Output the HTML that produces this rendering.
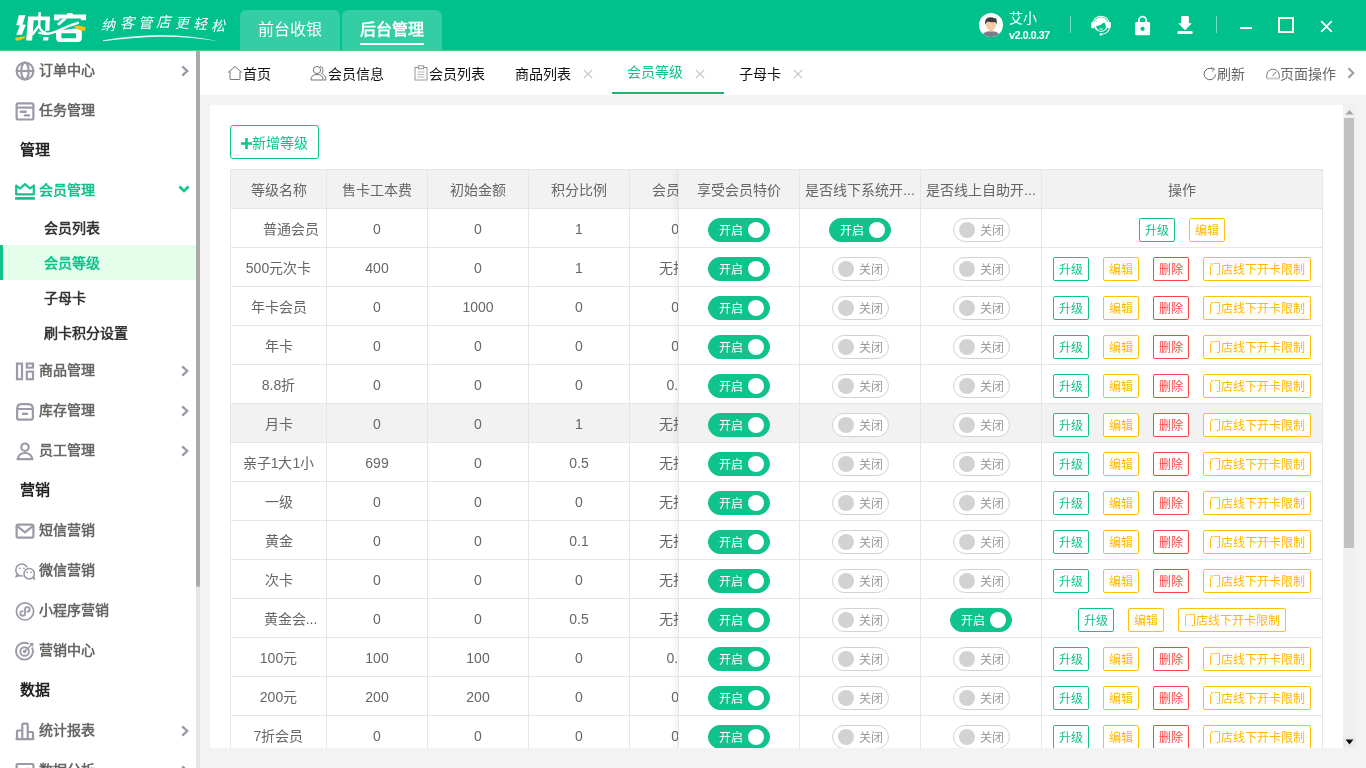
<!DOCTYPE html>
<html lang="zh-CN"><head><meta charset="utf-8"><title>纳客</title>
<style>
*{box-sizing:border-box;margin:0;padding:0}
html,body{width:1366px;height:768px;overflow:hidden}
body{-webkit-font-smoothing:antialiased;background:#f3f3f3;font-family:"Liberation Sans",sans-serif;font-size:14px;color:#666;position:relative}
.abs{position:absolute}
#hdr,#side,#tabs,#panel{will-change:transform}
#hdr{position:absolute;left:0;top:0;width:1366px;height:50px;background:#00c18b}
#hline{position:absolute;left:0;top:50px;width:1366px;height:1px;background:#3fd977}
.htab{position:absolute;top:10px;height:40px;width:100px;background:#33cea3;border-radius:6px 6px 0 0;color:#fff;font-size:16px;line-height:40px;text-align:center}
#side{position:absolute;left:0;top:51px;width:196px;height:717px;background:#fff;overflow:hidden}
#sbar{position:absolute;left:196px;top:51px;width:4px;height:717px;background:#e5e5e5}
#sbar i{position:absolute;left:0;top:0;width:4px;height:536px;background:#aaa;border-radius:0 0 2px 2px}
.mi{position:absolute;left:39px;font-size:14px;font-weight:bold;color:#666;line-height:20px;white-space:nowrap}
.mh{position:absolute;left:20px;font-size:15px;font-weight:bold;color:#222;line-height:20px}
.ms{position:absolute;left:44px;font-size:14px;font-weight:bold;color:#333;line-height:20px;white-space:nowrap}
.ic{position:absolute;left:15px;width:20px;height:20px}
.chev{position:absolute;left:180px;width:10px;height:12px}
#tabs{position:absolute;left:200px;top:51px;width:1166px;height:44px;background:#fff}
.tb{position:absolute;top:0;line-height:20px;font-size:14px;color:#111;white-space:nowrap}
.tx{position:absolute;width:10px;height:10px}
#panel{position:absolute;left:210px;top:105px;width:1133px;height:643px;background:#fff;overflow:hidden;border-radius:2px 0 0 2px}
#vs{position:absolute;left:1343px;top:105px;width:13px;height:643px;background:#f0f0f0}
#vs i{position:absolute;left:1px;top:13px;width:10px;height:430px;background:#c1c1c1}
#add{position:absolute;left:20px;top:20px;width:89px;height:34px;border:1px solid #10c28c;border-radius:3px;color:#10c28c;font-size:14px;line-height:34px;white-space:nowrap}
#tbl{position:absolute;left:20px;top:64px;width:1093px;height:600px;border-top:1px solid #e6e6e6;border-left:1px solid #e6e6e6}
.r{position:absolute;left:0;width:1092px;height:39px;border-bottom:1px solid #e6e6e6}
.c{position:absolute;top:0;height:38px;border-right:1px solid #e6e6e6;text-align:center;line-height:40px;font-size:14px;color:#666;white-space:nowrap;overflow:hidden}
.hd .c{background:#f2f2f2}
.hv .c{background:#f2f2f2}
#fix{position:absolute;left:468px;top:64px;width:645px;height:600px;background:#fff;border-top:1px solid #e6e6e6;border-left:1px solid #e6e6e6;box-shadow:-1px 0 8px rgba(0,0,0,.08);clip-path:inset(0 0 0 -12px)}
#fix .r{width:644px}
.sw{position:absolute;top:9px;height:24px;border-radius:12px;font-size:12px;line-height:25px}
.on{width:62px;background:#10c28c;border:1px solid #10c28c;color:#fff}
.on b{position:absolute;left:10px;top:0;font-weight:normal}
.on i{position:absolute;left:39px;top:3px;width:16px;height:16px;border-radius:8px;background:#fff}
.off{width:57px;background:#fff;border:1px solid #d2d2d2;color:#999}
.off b{position:absolute;left:26px;top:0;font-weight:normal}
.off i{position:absolute;left:5px;top:3px;width:16px;height:16px;border-radius:8px;background:#d2d2d2}
.bt{position:absolute;top:9px;height:24px;border-radius:2px;font-size:12px;line-height:25px;text-align:center;background:#fff;white-space:nowrap}
.bg{border:1px solid #10c28c;color:#10c28c;width:36px}
.by{border:1px solid #ffc107;color:#ffb800;width:36px}
.br{border:1px solid #ff4444;color:#ff4444;width:36px}
.bl{border:1px solid #ffc107;color:#ffb800;width:108px}
</style></head>
<body>
<div id="hdr"><svg class="abs" style="left:10px;top:6px" width="90" height="42" viewBox="0 0 1366 637">
<g fill="#fff">
<polygon points="135,140 235,140 190,280 240,285 180,435 95,435 150,295 95,290"/>
<polygon points="275,160 605,160 603,215 360,215 335,525 245,525"/>
<polygon points="540,200 605,200 598,375 532,375"/>
<polygon points="505,470 585,470 580,525 500,525"/>
<path d="M430 95 H470 L462 300 Q470 370 560 395 L540 430 Q450 400 440 330 L350 450 L320 420 L425 290 Z"/>
<path d="M440 385 Q560 440 760 340 Q900 270 1040 235 L1050 268 Q900 310 780 372 Q570 478 425 418 Z"/>
<rect x="870" y="105" width="80" height="45"/>
<path d="M670 130 H1155 V215 H1075 V188 H750 V215 H670 Z"/>
<polygon points="800,190 870,190 745,300 712,272"/>
<path fill-rule="evenodd" d="M700 400 L780 365 L1000 340 H1090 V490 Q1090 545 1030 545 H760 Q700 545 700 490 Z M780 415 H1000 V490 H780 Z"/>
</g>
<g fill="#ffc20e">
<polygon points="80,480 230,458 225,485 140,525 85,525"/>
<polygon points="965,310 1020,295 1150,320 1140,375 1060,370"/>
</g>
</svg><svg class="abs" style="left:98px;top:8px" width="134" height="40" viewBox="0 0 134 40">
<g font-family="Liberation Sans,sans-serif" font-style="italic" font-size="14" fill="#fff">
<text x="2.500" y="21.500">纳</text><text x="21.500" y="19.500" font-size="14.500">客</text><text x="39.500" y="19.500" font-size="14.500">管</text><text x="58" y="18.500" font-size="14.500">店</text><text x="76.500" y="19.500">更</text><text x="94.500" y="20.500">轻</text><text x="112.500" y="22.500">松</text>
</g>
<path d="M5 32.300 Q35 27 62 26.900 Q95 27.300 121 33.400 Q95 28.600 62 28.700 Q35 29.200 5.400 33.300 Z" fill="#fff" opacity=".9"/>
</svg><div class="htab" style="left:240px">前台收银</div><div class="htab" style="left:342px;font-weight:bold">后台管理<i class="abs" style="left:18px;top:33px;width:64px;height:2px;background:#fff"></i></div><svg class="abs" style="left:979px;top:13px" width="24" height="24" viewBox="0 0 24 24"><defs><clipPath id="av"><circle cx="12" cy="12" r="12"/></clipPath></defs><circle cx="12" cy="12" r="12" fill="#fff"/><g clip-path="url(#av)"><path d="M3 24 q0 -5.800 9 -5.800 q9 0 9 5.800z" fill="#7b7b8c"/><path d="M10.300 15 h3.400 v3.200 q-1.700 1.300 -3.400 0z" fill="#f3b58f"/><ellipse cx="12" cy="12" rx="5" ry="5.400" fill="#f7c9a4"/><path d="M6.300 12 q-1.300 -8 5.400 -7.800 q2.500 0 4 1.200 l1.300 -0.300 q1.700 3.500 0.600 6.900 q-0.300 -2.300 -1.600 -3.100 q-3.500 0.800 -7.300 -0.400 q-1.800 1 -2.400 3.500z" fill="#3c3c3c"/></g></svg><div class="abs" style="left:1009px;top:9px;color:#fff;font-size:14px;line-height:18px">艾小</div><div class="abs" style="left:1009px;top:28px;color:#fff;font-size:11px;font-weight:bold;line-height:14px;letter-spacing:-0.6px">v2.0.0.37</div><i class="abs" style="left:1070px;top:16px;width:1px;height:17px;background:rgba(255,255,255,.45)"></i><svg class="abs" style="left:1091px;top:14px" width="20" height="22" viewBox="0 0 20 22"><path d="M1.800 9.200 A8.300 8.300 0 0 1 18.200 9.200" stroke="#fff" stroke-width="1.100" fill="none"/><circle cx="10" cy="10.600" r="7.300" fill="#fff"/><rect x="0.200" y="8" width="3.400" height="6.200" rx="1.200" fill="#fff"/><rect x="16.400" y="8" width="3.400" height="6.200" rx="1.200" fill="#fff"/><path d="M5.100 12.200 Q9.500 11.800 13.200 8.200 Q15.600 11 14.900 14.200 Q13.200 17 10 17 Q6.300 17 5.100 12.200 Z" fill="#00c18b"/><path d="M8.200 14.700 Q10 15.900 11.800 14.700" stroke="#fff" stroke-width="0.900" fill="none"/><path d="M18.400 14 Q17.600 19.400 10.600 20.300" stroke="#fff" stroke-width="1.100" fill="none"/><circle cx="9.900" cy="20.300" r="1.350" fill="#fff"/></svg><svg class="abs" style="left:1134px;top:15px" width="17" height="22" viewBox="0 0 17 22"><path d="M4.900 8 v-2.600 a3.700 3.700 0 0 1 7.400 0 v2.600" stroke="#fff" stroke-width="1.800" fill="none"/><rect x="1.100" y="7" width="15" height="13.200" rx="1.500" fill="#fff"/><circle cx="8.600" cy="13.800" r="2.100" fill="#00c18b"/></svg><svg class="abs" style="left:1177px;top:15px" width="17" height="20" viewBox="0 0 17 20"><path d="M4.200 2.200 a1.300 1.300 0 0 1 1.300 -1.300 h5.100 a1.300 1.300 0 0 1 1.300 1.300 v6 h2.900 l-6.750 7.100 l-6.750 -7.100 h2.900 z" fill="#fff"/><rect x="0.400" y="16.100" width="15.300" height="3" rx="1.300" fill="#fff"/></svg><i class="abs" style="left:1216px;top:16px;width:1px;height:17px;background:rgba(255,255,255,.45)"></i><i class="abs" style="left:1240px;top:27px;width:12px;height:2px;background:#fff"></i><i class="abs" style="left:1278px;top:17px;width:16px;height:16px;border:2px solid #fdfde6"></i><svg class="abs" style="left:1320px;top:20px" width="13" height="13" viewBox="0 0 13 13"><path d="M1.200 1.200 L11.800 11.800 M11.800 1.200 L1.200 11.800" stroke="#fff" stroke-width="1.800"/></svg></div>
<div id="hline"></div>
<div id="side"><svg class="ic" style="top:10px" viewBox="0 0 20 20" fill="none" stroke="#9a9aa8" stroke-width="2.200"><circle cx="10" cy="10" r="8.400"/><ellipse cx="10" cy="10" rx="3.700" ry="8.400"/><path d="M1.600 10 H18.400"/></svg><div class="mi" style="top:9px">订单中心</div><svg class="chev" style="top:14px" viewBox="0 0 10 12"><path d="M2.300 1.300 L7.200 6 L2.300 10.700" stroke="#9a9aa8" stroke-width="2.400" fill="none"/></svg><svg class="ic" style="top:50px" viewBox="0 0 20 20" fill="none" stroke="#9a9aa8" stroke-width="2.200"><rect x="1.600" y="2.300" width="16.800" height="16.200" rx="1.800"/><path d="M1.600 6.600 H18.400"/><path d="M5.800 10.800 H10.800 M9.800 14.400 H14" stroke-linecap="round" stroke-width="2.400"/></svg><div class="mi" style="top:49px">任务管理</div><div class="mh" style="top:89px">管理</div><svg class="ic" style="top:130px" viewBox="0 0 20 20" fill="none" stroke="#10c28c" stroke-width="2.200"><path d="M1.200 13.400 V4.500 L5 7.500 L10 3.200 L15 7.500 L18.800 4.500 V13.400 Z" stroke-linejoin="round"/><path d="M1.200 17.400 H18.800" stroke-width="2.700" stroke-linecap="round"/></svg><div class="mi" style="top:129px;color:#10c28c">会员管理</div><svg class="chev" style="top:132px;left:178px;width:12px" viewBox="0 0 12 12"><path d="M1.500 3.500 L6 8 L10.500 3.500" stroke="#10c28c" stroke-width="2.600" fill="none"/></svg><div class="ms" style="top:167px">会员列表</div><div class="abs" style="left:0;top:194px;width:196px;height:35px;background:#e5fdeb"><i class="abs" style="left:0;top:0;width:3px;height:35px;background:#10c28c"></i></div><div class="ms" style="top:202px;color:#10c28c">会员等级</div><div class="ms" style="top:237px">子母卡</div><div class="ms" style="top:272px">刷卡积分设置</div><svg class="ic" style="top:310px" viewBox="0 0 20 20" fill="none" stroke="#9a9aa8" stroke-width="2.200"><rect x="2" y="2.600" width="5" height="15.600"/><rect x="11.800" y="2.600" width="6.200" height="4"/><rect x="11.800" y="10.600" width="6.200" height="7.600"/></svg><div class="mi" style="top:309px">商品管理</div><svg class="chev" style="top:314px" viewBox="0 0 10 12"><path d="M2.300 1.300 L7.200 6 L2.300 10.700" stroke="#9a9aa8" stroke-width="2.400" fill="none"/></svg><svg class="ic" style="top:350px" viewBox="0 0 20 20" fill="none" stroke="#9a9aa8" stroke-width="2.200"><path d="M2.100 8.200 Q2.100 3.200 6.500 3.200 H13.500 Q17.900 3.200 17.900 8.200"/><rect x="2.100" y="8" width="15.800" height="10.600" rx="1.800"/><path d="M7 12.800 H13" stroke-width="2.400"/></svg><div class="mi" style="top:349px">库存管理</div><svg class="chev" style="top:354px" viewBox="0 0 10 12"><path d="M2.300 1.300 L7.200 6 L2.300 10.700" stroke="#9a9aa8" stroke-width="2.400" fill="none"/></svg><svg class="ic" style="top:390px" viewBox="0 0 20 20" fill="none" stroke="#9a9aa8" stroke-width="2.200"><circle cx="10" cy="6.200" r="3.700"/><path d="M2.500 18.200 Q4 12 10 12 Q16 12 17.500 18.200 Z" stroke-linejoin="round"/></svg><div class="mi" style="top:389px">员工管理</div><svg class="chev" style="top:394px" viewBox="0 0 10 12"><path d="M2.300 1.300 L7.200 6 L2.300 10.700" stroke="#9a9aa8" stroke-width="2.400" fill="none"/></svg><div class="mh" style="top:429px">营销</div><svg class="ic" style="top:470px" viewBox="0 0 20 20" fill="none" stroke="#9a9aa8" stroke-width="2.200"><rect x="1.600" y="3.600" width="16.800" height="13" rx="1.500"/><path d="M2.200 5.200 L10 11.400 L17.800 5.200"/></svg><div class="mi" style="top:469px">短信营销</div><svg class="ic" style="top:510px" viewBox="0 0 20 20" fill="none" stroke="#9a9aa8" stroke-width="2.200"><g stroke-width="1.600"><circle cx="6.800" cy="9" r="6"/><path d="M2.300 13 L1.200 15.600 L4.600 14.500"/><circle cx="14.200" cy="12.700" r="6.700" fill="#fff" stroke="none"/><circle cx="14.200" cy="12.700" r="5.200" fill="#fff"/><path d="M17.700 16.600 L19.200 17.800 L18.700 15.300"/></g><g stroke="none" fill="#9a9aa8"><circle cx="5" cy="7.300" r="0.900"/><circle cx="9" cy="7.300" r="0.900"/><circle cx="12.200" cy="11.300" r="0.900"/><circle cx="16.200" cy="11.300" r="0.900"/></g></svg><div class="mi" style="top:509px">微信营销</div><svg class="ic" style="top:550px" viewBox="0 0 20 20" fill="none" stroke="#9a9aa8" stroke-width="2.200"><circle cx="10" cy="10.400" r="8.600" stroke-width="1.700"/><path d="M10 12.400 a2.300 2.300 0 1 1 -2.300 -2.300 M10 12.400 V8.400 a2.300 2.300 0 1 1 2.300 2.300" stroke-width="1.800" stroke-linecap="round"/></svg><div class="mi" style="top:549px">小程序营销</div><svg class="ic" style="top:590px" viewBox="0 0 20 20" fill="none" stroke="#9a9aa8" stroke-width="2.200"><path d="M17 6.500 A8.400 8.400 0 1 1 13.800 3" stroke-width="1.900"/><circle cx="9.600" cy="10.500" r="4.300" stroke-width="1.900"/><circle cx="9.600" cy="10.500" r="1.800" fill="#9a9aa8" stroke="none"/><path d="M10 10 L17.500 2.800" stroke-width="1.500"/><path d="M15 2.500 L18 2.300 L17.700 5.300 Z" fill="#9a9aa8" stroke-width="1"/></svg><div class="mi" style="top:589px">营销中心</div><div class="mh" style="top:629px">数据</div><svg class="ic" style="top:670px" viewBox="0 0 20 20" fill="none" stroke="#9a9aa8" stroke-width="2.200"><path d="M2 18 V10.500 Q2 9.500 3 9.500 H7.300 M7.300 18 V3.700 Q7.300 2.700 8.300 2.700 H11.700 Q12.700 2.700 12.700 3.700 V18 M12.700 11 H17 Q18 11 18 12 V18 M1.500 18.200 H18.500" stroke-linejoin="round" stroke-linecap="round"/></svg><div class="mi" style="top:669px">统计报表</div><svg class="chev" style="top:674px" viewBox="0 0 10 12"><path d="M2.300 1.300 L7.200 6 L2.300 10.700" stroke="#9a9aa8" stroke-width="2.400" fill="none"/></svg><svg class="ic" style="top:710px" viewBox="0 0 20 20" fill="none" stroke="#9a9aa8" stroke-width="2.200"><rect x="1.600" y="3" width="16.800" height="13" rx="1"/><path d="M6 12 L9 9 L11 11 L14.500 7"/></svg><div class="mi" style="top:709px">数据分析</div><svg class="chev" style="top:714px" viewBox="0 0 10 12"><path d="M2.300 1.300 L7.200 6 L2.300 10.700" stroke="#9a9aa8" stroke-width="2.400" fill="none"/></svg></div>
<div id="sbar"><i></i></div>
<div id="tabs"><svg class="abs" style="left:27px;top:14px" width="16" height="16" viewBox="0 0 16 16" fill="none" stroke="#777" stroke-width="1"><path d="M1 7.500 L8 1.500 L15 7.500"/><path d="M3 6.500 V14 Q3 14.500 3.500 14.500 H12.500 Q13 14.500 13 14 V6.500"/></svg><div class="tb" style="left:43px;top:13px">首页</div><svg class="abs" style="left:110px;top:14px" width="17" height="16" viewBox="0 0 17 16" fill="none" stroke="#777" stroke-width="1"><circle cx="7" cy="5" r="3.600"/><path d="M1 15 Q1 9.500 7 9.500 Q13 9.500 13 15 Z"/><path d="M10 1.300 Q13.500 2 13 5.500 Q12.800 7.500 11.500 8.500 Q15.500 9.500 16 15 H13.500"/></svg><div class="tb" style="left:128px;top:13px">会员信息</div><svg class="abs" style="left:214px;top:14px" width="14" height="16" viewBox="0 0 14 16" fill="none" stroke="#8a8a8a" stroke-width="0.900"><rect x="1" y="2.500" width="12" height="12.500"/><rect x="4.300" y="0.800" width="5.400" height="3" fill="#fff"/><path d="M3.500 7 H10.500 M3.500 9.500 H10.500 M3.500 12 H10.500" stroke="#aaa"/></svg><div class="tb" style="left:229px;top:13px">会员列表</div><div class="tb" style="left:315px;top:13px">商品列表</div><svg class="tx" style="left:383px;top:17.500px" viewBox="0 0 10 10"><path d="M0.800 0.800 L9.200 9.200 M9.200 0.800 L0.800 9.200" stroke="#c2c2c2" stroke-width="1.100"/></svg><div class="tb" style="left:427px;top:11px;color:#10c28c">会员等级</div><svg class="tx" style="left:495px;top:17.500px" viewBox="0 0 10 10"><path d="M0.800 0.800 L9.200 9.200 M9.200 0.800 L0.800 9.200" stroke="#c2c2c2" stroke-width="1.100"/></svg><i class="abs" style="left:412px;top:41px;width:112px;height:2px;background:#1fb36e"></i><div class="tb" style="left:539px;top:13px">子母卡</div><svg class="tx" style="left:593px;top:17.500px" viewBox="0 0 10 10"><path d="M0.800 0.800 L9.200 9.200 M9.200 0.800 L0.800 9.200" stroke="#c2c2c2" stroke-width="1.100"/></svg><svg class="abs" style="left:1003px;top:16px" width="14" height="14" viewBox="0 0 14 14" fill="none" stroke="#666" stroke-width="1"><path d="M12.500 7.500 A5.700 5.700 0 1 1 9.500 2"/><path d="M8.500 0.500 L11.500 2.200 L9 4.500" /></svg><div class="tb" style="left:1017px;top:13px;color:#666">刷新</div><svg class="abs" style="left:1066px;top:17px" width="14" height="12" viewBox="0 0 14 12" fill="none" stroke="#777" stroke-width="1"><path d="M0.700 10 V7.500 A6.300 6.300 0 0 1 13.300 7.500 V10"/><path d="M0.300 10.500 H13.700" stroke="#c8c8c8" stroke-width="1.800"/><path d="M6.500 8 L9.800 4"/></svg><div class="tb" style="left:1080px;top:13px;color:#666">页面操作</div><svg class="abs" style="left:1146px;top:16px" width="10" height="12" viewBox="0 0 10 12"><path d="M2.500 1.200 L7.300 6 L2.500 10.800" stroke="#9a9aa8" stroke-width="2" fill="none"/></svg></div>
<div id="panel"><div id="add"><svg class="abs" style="left:10px;top:11.500px" width="11" height="11" viewBox="0 0 11 11"><path d="M5.500 0 V11 M0 5.500 H11" stroke="#10c28c" stroke-width="2.600"/></svg><span class="abs" style="left:21px;top:0">新增等级</span></div><div id="tbl"><div class="r hd" style="top:0"><div class="c" style="left:0px;width:96px">等级名称</div><div class="c" style="left:96px;width:101px">售卡工本费</div><div class="c" style="left:197px;width:101px">初始金额</div><div class="c" style="left:298px;width:101px">积分比例</div><div class="c" style="left:399px;width:101px">会员折扣</div></div><div class="r" style="top:39px"><div class="c" style="left:0px;width:96px;padding-left:24px">普通会员</div><div class="c" style="left:96px;width:101px">0</div><div class="c" style="left:197px;width:101px">0</div><div class="c" style="left:298px;width:101px">1</div><div class="c" style="left:399px;width:101px;padding-right:6px">0&nbsp;</div></div><div class="r" style="top:78px"><div class="c" style="left:0px;width:96px">500元次卡</div><div class="c" style="left:96px;width:101px">400</div><div class="c" style="left:197px;width:101px">0</div><div class="c" style="left:298px;width:101px">1</div><div class="c" style="left:399px;width:101px">无折扣</div></div><div class="r" style="top:117px"><div class="c" style="left:0px;width:96px">年卡会员</div><div class="c" style="left:96px;width:101px">0</div><div class="c" style="left:197px;width:101px">1000</div><div class="c" style="left:298px;width:101px">0</div><div class="c" style="left:399px;width:101px;padding-right:6px">0&nbsp;</div></div><div class="r" style="top:156px"><div class="c" style="left:0px;width:96px">年卡</div><div class="c" style="left:96px;width:101px">0</div><div class="c" style="left:197px;width:101px">0</div><div class="c" style="left:298px;width:101px">0</div><div class="c" style="left:399px;width:101px;padding-right:6px">0&nbsp;</div></div><div class="r" style="top:195px"><div class="c" style="left:0px;width:96px">8.8折</div><div class="c" style="left:96px;width:101px">0</div><div class="c" style="left:197px;width:101px">0</div><div class="c" style="left:298px;width:101px">0</div><div class="c" style="left:399px;width:101px">0.88</div></div><div class="r hv" style="top:234px"><div class="c" style="left:0px;width:96px">月卡</div><div class="c" style="left:96px;width:101px">0</div><div class="c" style="left:197px;width:101px">0</div><div class="c" style="left:298px;width:101px">1</div><div class="c" style="left:399px;width:101px">无折扣</div></div><div class="r" style="top:273px"><div class="c" style="left:0px;width:96px">亲子1大1小</div><div class="c" style="left:96px;width:101px">699</div><div class="c" style="left:197px;width:101px">0</div><div class="c" style="left:298px;width:101px">0.5</div><div class="c" style="left:399px;width:101px">无折扣</div></div><div class="r" style="top:312px"><div class="c" style="left:0px;width:96px">一级</div><div class="c" style="left:96px;width:101px">0</div><div class="c" style="left:197px;width:101px">0</div><div class="c" style="left:298px;width:101px">0</div><div class="c" style="left:399px;width:101px">无折扣</div></div><div class="r" style="top:351px"><div class="c" style="left:0px;width:96px">黄金</div><div class="c" style="left:96px;width:101px">0</div><div class="c" style="left:197px;width:101px">0</div><div class="c" style="left:298px;width:101px">0.1</div><div class="c" style="left:399px;width:101px">无折扣</div></div><div class="r" style="top:390px"><div class="c" style="left:0px;width:96px">次卡</div><div class="c" style="left:96px;width:101px">0</div><div class="c" style="left:197px;width:101px">0</div><div class="c" style="left:298px;width:101px">0</div><div class="c" style="left:399px;width:101px">无折扣</div></div><div class="r" style="top:429px"><div class="c" style="left:0px;width:96px;padding-left:24px">黄金会...</div><div class="c" style="left:96px;width:101px">0</div><div class="c" style="left:197px;width:101px">0</div><div class="c" style="left:298px;width:101px">0.5</div><div class="c" style="left:399px;width:101px">无折扣</div></div><div class="r" style="top:468px"><div class="c" style="left:0px;width:96px">100元</div><div class="c" style="left:96px;width:101px">100</div><div class="c" style="left:197px;width:101px">100</div><div class="c" style="left:298px;width:101px">0</div><div class="c" style="left:399px;width:101px">0.95</div></div><div class="r" style="top:507px"><div class="c" style="left:0px;width:96px">200元</div><div class="c" style="left:96px;width:101px">200</div><div class="c" style="left:197px;width:101px">200</div><div class="c" style="left:298px;width:101px">0</div><div class="c" style="left:399px;width:101px;padding-right:6px">0&nbsp;</div></div><div class="r" style="top:546px"><div class="c" style="left:0px;width:96px">7折会员</div><div class="c" style="left:96px;width:101px">0</div><div class="c" style="left:197px;width:101px">0</div><div class="c" style="left:298px;width:101px">0</div><div class="c" style="left:399px;width:101px;padding-right:6px">0&nbsp;</div></div><div class="r" style="top:585px"><div class="c" style="left:0px;width:96px"></div><div class="c" style="left:96px;width:101px"></div><div class="c" style="left:197px;width:101px"></div><div class="c" style="left:298px;width:101px"></div><div class="c" style="left:399px;width:101px"></div></div></div><div id="fix"><div class="r hd" style="top:0"><div class="c" style="left:0px;width:121px">享受会员特价</div><div class="c" style="left:121px;width:121px">是否线下系统开...</div><div class="c" style="left:242px;width:121px">是否线上自助开...</div><div class="c" style="left:363px;width:281px">操作</div></div><div class="r" style="top:39px"><div class="c" style="left:0px;width:121px"></div><div class="c" style="left:121px;width:121px"></div><div class="c" style="left:242px;width:121px"></div><div class="c" style="left:363px;width:281px"></div><div class="sw on" style="left:29px"><b>开启</b><i></i></div><div class="sw on" style="left:150px"><b>开启</b><i></i></div><div class="sw off" style="left:274px"><b>关闭</b><i></i></div><div class="bt bg" style="left:460px">升级</div><div class="bt by" style="left:510px">编辑</div></div><div class="r" style="top:78px"><div class="c" style="left:0px;width:121px"></div><div class="c" style="left:121px;width:121px"></div><div class="c" style="left:242px;width:121px"></div><div class="c" style="left:363px;width:281px"></div><div class="sw on" style="left:29px"><b>开启</b><i></i></div><div class="sw off" style="left:153px"><b>关闭</b><i></i></div><div class="sw off" style="left:274px"><b>关闭</b><i></i></div><div class="bt bg" style="left:374px">升级</div><div class="bt by" style="left:424px">编辑</div><div class="bt br" style="left:474px">删除</div><div class="bt bl" style="left:524px">门店线下开卡限制</div></div><div class="r" style="top:117px"><div class="c" style="left:0px;width:121px"></div><div class="c" style="left:121px;width:121px"></div><div class="c" style="left:242px;width:121px"></div><div class="c" style="left:363px;width:281px"></div><div class="sw on" style="left:29px"><b>开启</b><i></i></div><div class="sw off" style="left:153px"><b>关闭</b><i></i></div><div class="sw off" style="left:274px"><b>关闭</b><i></i></div><div class="bt bg" style="left:374px">升级</div><div class="bt by" style="left:424px">编辑</div><div class="bt br" style="left:474px">删除</div><div class="bt bl" style="left:524px">门店线下开卡限制</div></div><div class="r" style="top:156px"><div class="c" style="left:0px;width:121px"></div><div class="c" style="left:121px;width:121px"></div><div class="c" style="left:242px;width:121px"></div><div class="c" style="left:363px;width:281px"></div><div class="sw on" style="left:29px"><b>开启</b><i></i></div><div class="sw off" style="left:153px"><b>关闭</b><i></i></div><div class="sw off" style="left:274px"><b>关闭</b><i></i></div><div class="bt bg" style="left:374px">升级</div><div class="bt by" style="left:424px">编辑</div><div class="bt br" style="left:474px">删除</div><div class="bt bl" style="left:524px">门店线下开卡限制</div></div><div class="r" style="top:195px"><div class="c" style="left:0px;width:121px"></div><div class="c" style="left:121px;width:121px"></div><div class="c" style="left:242px;width:121px"></div><div class="c" style="left:363px;width:281px"></div><div class="sw on" style="left:29px"><b>开启</b><i></i></div><div class="sw off" style="left:153px"><b>关闭</b><i></i></div><div class="sw off" style="left:274px"><b>关闭</b><i></i></div><div class="bt bg" style="left:374px">升级</div><div class="bt by" style="left:424px">编辑</div><div class="bt br" style="left:474px">删除</div><div class="bt bl" style="left:524px">门店线下开卡限制</div></div><div class="r hv" style="top:234px"><div class="c" style="left:0px;width:121px"></div><div class="c" style="left:121px;width:121px"></div><div class="c" style="left:242px;width:121px"></div><div class="c" style="left:363px;width:281px"></div><div class="sw on" style="left:29px"><b>开启</b><i></i></div><div class="sw off" style="left:153px"><b>关闭</b><i></i></div><div class="sw off" style="left:274px"><b>关闭</b><i></i></div><div class="bt bg" style="left:374px">升级</div><div class="bt by" style="left:424px">编辑</div><div class="bt br" style="left:474px">删除</div><div class="bt bl" style="left:524px">门店线下开卡限制</div></div><div class="r" style="top:273px"><div class="c" style="left:0px;width:121px"></div><div class="c" style="left:121px;width:121px"></div><div class="c" style="left:242px;width:121px"></div><div class="c" style="left:363px;width:281px"></div><div class="sw on" style="left:29px"><b>开启</b><i></i></div><div class="sw off" style="left:153px"><b>关闭</b><i></i></div><div class="sw off" style="left:274px"><b>关闭</b><i></i></div><div class="bt bg" style="left:374px">升级</div><div class="bt by" style="left:424px">编辑</div><div class="bt br" style="left:474px">删除</div><div class="bt bl" style="left:524px">门店线下开卡限制</div></div><div class="r" style="top:312px"><div class="c" style="left:0px;width:121px"></div><div class="c" style="left:121px;width:121px"></div><div class="c" style="left:242px;width:121px"></div><div class="c" style="left:363px;width:281px"></div><div class="sw on" style="left:29px"><b>开启</b><i></i></div><div class="sw off" style="left:153px"><b>关闭</b><i></i></div><div class="sw off" style="left:274px"><b>关闭</b><i></i></div><div class="bt bg" style="left:374px">升级</div><div class="bt by" style="left:424px">编辑</div><div class="bt br" style="left:474px">删除</div><div class="bt bl" style="left:524px">门店线下开卡限制</div></div><div class="r" style="top:351px"><div class="c" style="left:0px;width:121px"></div><div class="c" style="left:121px;width:121px"></div><div class="c" style="left:242px;width:121px"></div><div class="c" style="left:363px;width:281px"></div><div class="sw on" style="left:29px"><b>开启</b><i></i></div><div class="sw off" style="left:153px"><b>关闭</b><i></i></div><div class="sw off" style="left:274px"><b>关闭</b><i></i></div><div class="bt bg" style="left:374px">升级</div><div class="bt by" style="left:424px">编辑</div><div class="bt br" style="left:474px">删除</div><div class="bt bl" style="left:524px">门店线下开卡限制</div></div><div class="r" style="top:390px"><div class="c" style="left:0px;width:121px"></div><div class="c" style="left:121px;width:121px"></div><div class="c" style="left:242px;width:121px"></div><div class="c" style="left:363px;width:281px"></div><div class="sw on" style="left:29px"><b>开启</b><i></i></div><div class="sw off" style="left:153px"><b>关闭</b><i></i></div><div class="sw off" style="left:274px"><b>关闭</b><i></i></div><div class="bt bg" style="left:374px">升级</div><div class="bt by" style="left:424px">编辑</div><div class="bt br" style="left:474px">删除</div><div class="bt bl" style="left:524px">门店线下开卡限制</div></div><div class="r" style="top:429px"><div class="c" style="left:0px;width:121px"></div><div class="c" style="left:121px;width:121px"></div><div class="c" style="left:242px;width:121px"></div><div class="c" style="left:363px;width:281px"></div><div class="sw on" style="left:29px"><b>开启</b><i></i></div><div class="sw off" style="left:153px"><b>关闭</b><i></i></div><div class="sw on" style="left:271px"><b>开启</b><i></i></div><div class="bt bg" style="left:399px">升级</div><div class="bt by" style="left:449px">编辑</div><div class="bt bl" style="left:499px">门店线下开卡限制</div></div><div class="r" style="top:468px"><div class="c" style="left:0px;width:121px"></div><div class="c" style="left:121px;width:121px"></div><div class="c" style="left:242px;width:121px"></div><div class="c" style="left:363px;width:281px"></div><div class="sw on" style="left:29px"><b>开启</b><i></i></div><div class="sw off" style="left:153px"><b>关闭</b><i></i></div><div class="sw off" style="left:274px"><b>关闭</b><i></i></div><div class="bt bg" style="left:374px">升级</div><div class="bt by" style="left:424px">编辑</div><div class="bt br" style="left:474px">删除</div><div class="bt bl" style="left:524px">门店线下开卡限制</div></div><div class="r" style="top:507px"><div class="c" style="left:0px;width:121px"></div><div class="c" style="left:121px;width:121px"></div><div class="c" style="left:242px;width:121px"></div><div class="c" style="left:363px;width:281px"></div><div class="sw on" style="left:29px"><b>开启</b><i></i></div><div class="sw off" style="left:153px"><b>关闭</b><i></i></div><div class="sw off" style="left:274px"><b>关闭</b><i></i></div><div class="bt bg" style="left:374px">升级</div><div class="bt by" style="left:424px">编辑</div><div class="bt br" style="left:474px">删除</div><div class="bt bl" style="left:524px">门店线下开卡限制</div></div><div class="r" style="top:546px"><div class="c" style="left:0px;width:121px"></div><div class="c" style="left:121px;width:121px"></div><div class="c" style="left:242px;width:121px"></div><div class="c" style="left:363px;width:281px"></div><div class="sw on" style="left:29px"><b>开启</b><i></i></div><div class="sw off" style="left:153px"><b>关闭</b><i></i></div><div class="sw off" style="left:274px"><b>关闭</b><i></i></div><div class="bt bg" style="left:374px">升级</div><div class="bt by" style="left:424px">编辑</div><div class="bt br" style="left:474px">删除</div><div class="bt bl" style="left:524px">门店线下开卡限制</div></div><div class="r" style="top:585px"><div class="c" style="left:0px;width:121px"></div><div class="c" style="left:121px;width:121px"></div><div class="c" style="left:242px;width:121px"></div><div class="c" style="left:363px;width:281px"></div><div class="sw on" style="left:29px"><b>开启</b><i></i></div><div class="sw off" style="left:153px"><b>关闭</b><i></i></div><div class="sw off" style="left:274px"><b>关闭</b><i></i></div><div class="bt bg" style="left:374px">升级</div><div class="bt by" style="left:424px">编辑</div><div class="bt br" style="left:474px">删除</div><div class="bt bl" style="left:524px">门店线下开卡限制</div></div></div></div>
<div id="vs"><svg class="abs" style="left:2px;top:4px" width="9" height="6" viewBox="0 0 9 6"><path d="M0.500 5.500 L4.500 1 L8.500 5.500 Z" fill="#a3a3a3"/></svg><i></i><b class="abs" style="left:0;top:631px;width:13px;height:12px;background:#ececec"></b><svg class="abs" style="left:2px;top:634px" width="9" height="6" viewBox="0 0 9 6"><path d="M0.500 0.500 L4.500 5.500 L8.500 0.500 Z" fill="#111"/></svg></div>
</body></html>
